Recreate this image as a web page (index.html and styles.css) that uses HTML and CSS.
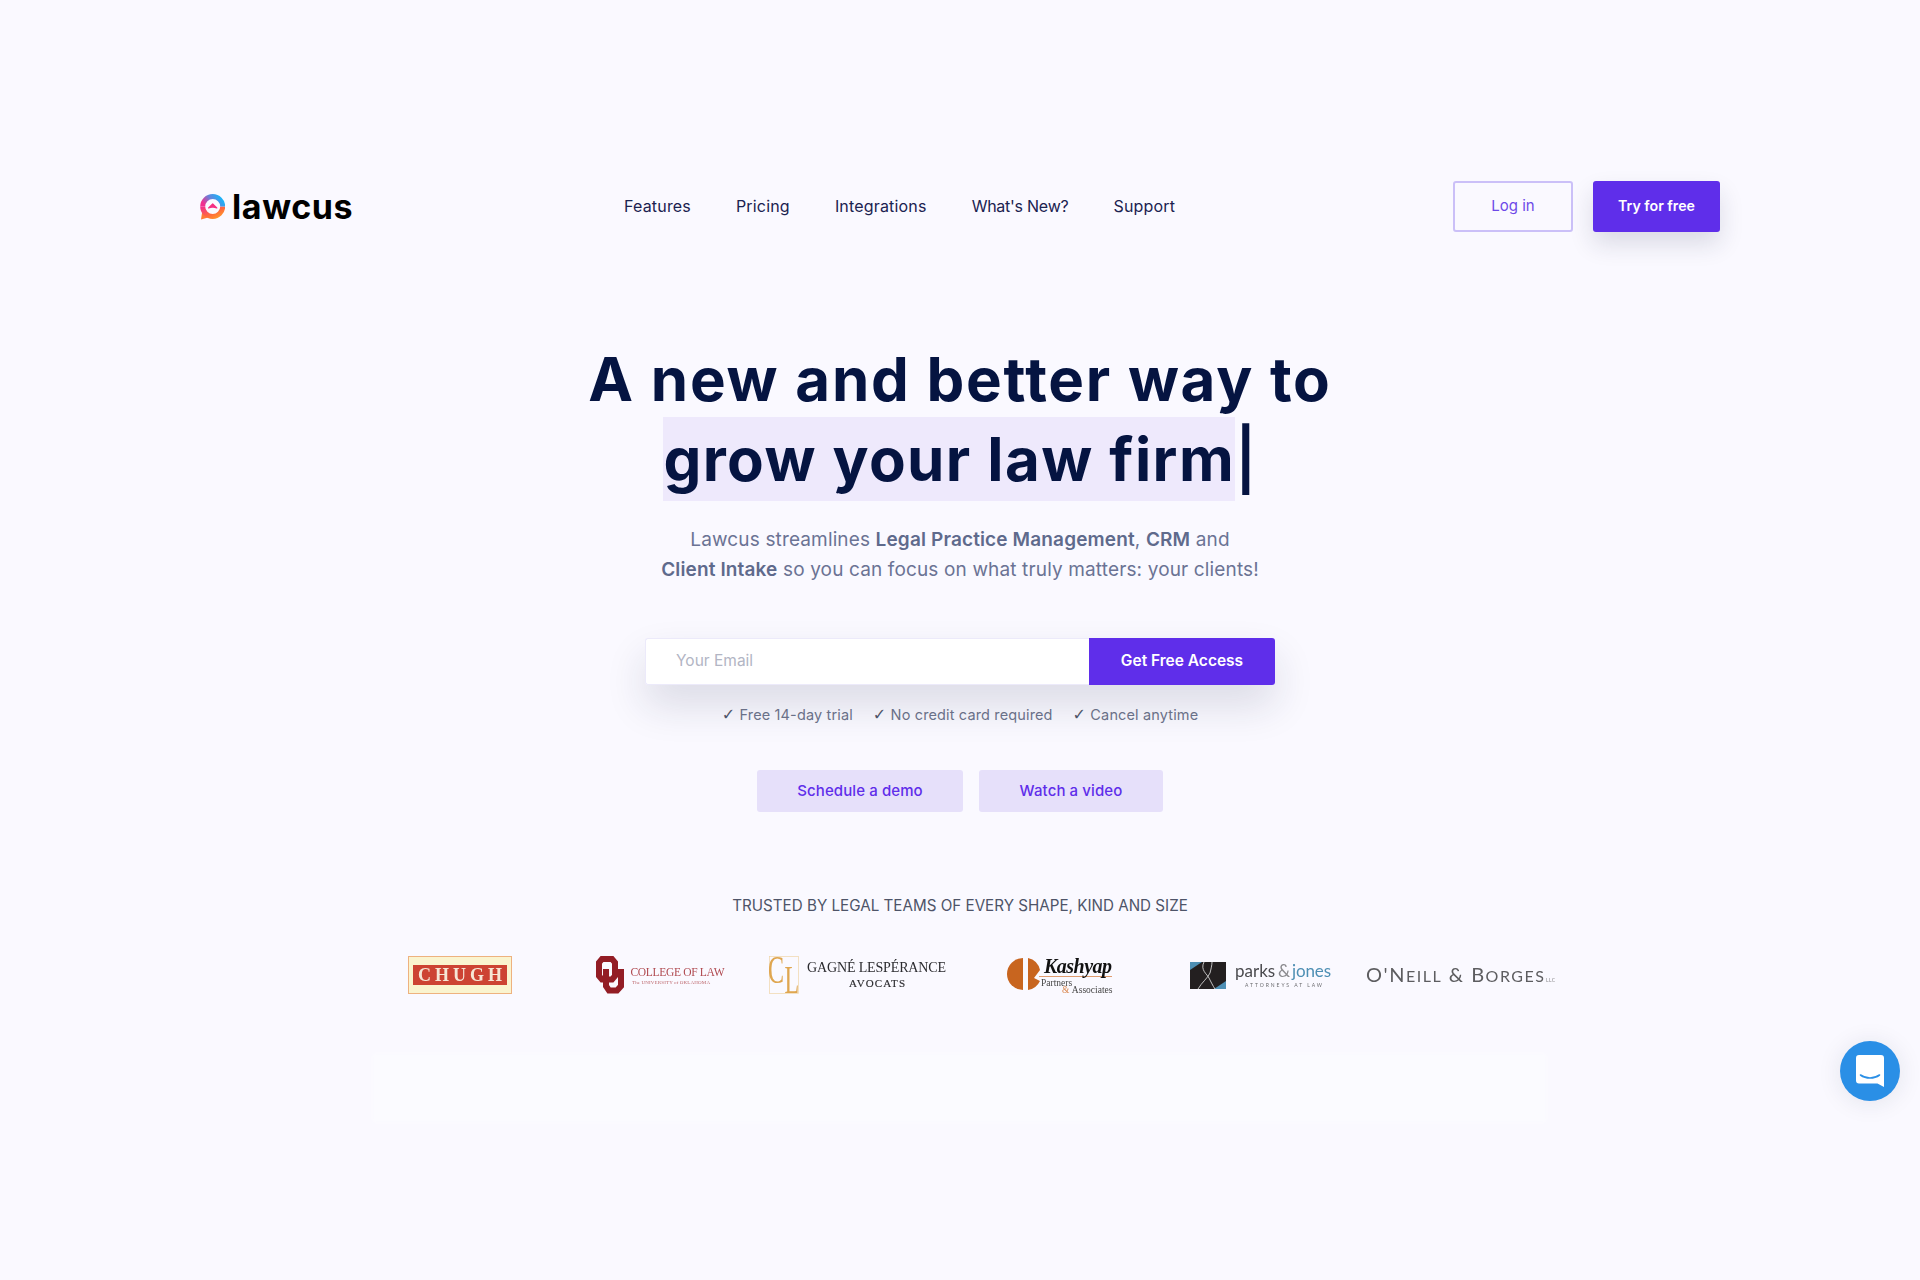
FILE: index.html
```html
<!DOCTYPE html>
<html lang="en">
<head>
<meta charset="utf-8">
<title>Lawcus</title>
<link rel="stylesheet" href="styles.css">
</head>
<body>
<div class="page">
  <header class="header">
    <a class="brand" href="#">
      <svg class="brand-mark" viewBox="0 0 25 27" width="25" height="27" aria-hidden="true">
        <defs>
          <linearGradient id="ringTop" x1="1" y1="0.2" x2="0" y2="0.6"><stop offset="0" stop-color="#12b8fb"/><stop offset="0.55" stop-color="#6e7fd8"/><stop offset="1" stop-color="#f22f8f"/></linearGradient>
          <linearGradient id="ringBot" x1="0" y1="0" x2="1" y2="1"><stop offset="0" stop-color="#f22f8f"/><stop offset="0.6" stop-color="#ff6a3c"/><stop offset="1" stop-color="#ff9a2a"/></linearGradient>
        </defs>
        <path d="M2.5 17 L1 26.5 L10 24 Z" fill="#ff7a35"/>
        <path d="M2.7 13.5 A10 10 0 0 0 22.7 13.5" fill="none" stroke="url(#ringBot)" stroke-width="5"/>
        <path d="M22.7 13.5 A10 10 0 0 0 2.7 13.5" fill="none" stroke="url(#ringTop)" stroke-width="5"/>
        <path d="M8.6 15 L12.7 11 L16.8 15 L12.7 14 Z" fill="#f42f83" stroke="#f42f83" stroke-width="1.2" stroke-linejoin="round"/>
      </svg>
      <span class="brand-name">lawcus</span>
    </a>
    <nav class="nav">
      <a href="#">Features</a>
      <a href="#">Pricing</a>
      <a href="#">Integrations</a>
      <a class="nav-tight" href="#">What's New?</a>
      <a href="#">Support</a>
    </nav>
    <div class="actions">
      <a class="btn btn-outline" href="#">Log in</a>
      <a class="btn btn-solid" href="#">Try for free</a>
    </div>
  </header>

  <section class="hero">
    <h1 class="title">
      <span class="title-line">A new and better way to</span>
      <span class="title-line title-second"><span class="mark">grow your law firm</span><span class="caret">|</span></span>
    </h1>
    <p class="lead">Lawcus streamlines <b>Legal Practice Management</b>, <b>CRM</b> and<br><b>Client Intake</b> so you can focus on what truly matters: your clients!</p>
    <form class="signup">
      <input class="signup-input" type="email" placeholder="Your Email">
      <button class="signup-btn" type="button">Get Free Access</button>
    </form>
    <ul class="checks">
      <li><span class="tick">✓</span> Free 14-day trial</li>
      <li><span class="tick">✓</span> No credit card required</li>
      <li><span class="tick">✓</span> Cancel anytime</li>
    </ul>
    <div class="secondary">
      <a class="btn-soft btn-demo" href="#">Schedule a demo</a>
      <a class="btn-soft btn-video" href="#">Watch a video</a>
    </div>
  </section>

  <section class="trusted">
    <h2 class="trusted-title">TRUSTED BY LEGAL TEAMS OF EVERY SHAPE, KIND AND SIZE</h2>
    <div class="logos">
      <svg class="logo" width="104" height="38" viewBox="0 0 104 38">
        <rect x="0.5" y="0.5" width="103" height="37" fill="#faf4cf" stroke="#eeb27f"/>
        <rect x="5" y="9" width="94" height="20" fill="#cd4333"/>
        <text class="t-serif-b" x="52" y="24.5" font-size="18" text-anchor="middle" fill="#f6e6d6" textLength="84">CHUGH</text>
      </svg>
      <svg class="logo" width="129" height="38" viewBox="0 0 129 38">
        <path d="M6 3 H16 L19 6.5 V20 L16 23.5 H6 L3 20 V6.5 Z" fill="none" stroke="#931d25" stroke-width="6"/>
        <path d="M10 13 V30 L13 34.5 H21 L25 30 V13" fill="none" stroke="#931d25" stroke-width="6"/>
        <text class="t-serif" x="34.5" y="20" font-size="11.5" fill="#b04a50" textLength="94">COLLEGE OF LAW</text>
        <text class="t-serif" x="36" y="27.5" font-size="5" fill="#bd666b" textLength="78">The UNIVERSITY of OKLAHOMA</text>
      </svg>
      <svg class="logo logo-gl" width="177" height="38" viewBox="0 0 177 38">
        <rect x="0.5" y="0.5" width="29" height="37" fill="none" stroke="#efd6a8" stroke-width="0.7"/>
        <text class="t-serif" transform="scale(1 1.7)" x="-1" y="15.9" font-size="24" fill="#dfa650">C</text>
        <text class="t-serif" transform="scale(1 1.7)" x="15.5" y="22" font-size="24" fill="#dfa650">L</text>
        <text class="t-serif" x="38" y="16" font-size="14" fill="#2b2b2f" textLength="139">GAGNÉ LESPÉRANCE</text>
        <text class="t-serif" x="80" y="31" font-size="11" fill="#2b2b2f" stroke="#2b2b2f" stroke-width="0.15" textLength="56">AVOCATS</text>
      </svg>
      <svg class="logo" width="103" height="36" viewBox="0 0 103 36">
        <path d="M14 1 A16 16 0 0 0 14 33 Z" fill="#c8651f"/>
        <path d="M19 1 A16 16 0 0 1 31 13 L25 21 L31 24 A16 16 0 0 1 19 33 Z" fill="#c8651f"/>
        <path d="M30 19.5 H103" stroke="#d9844a" stroke-width="0.8"/>
        <text class="t-script" x="35" y="16" font-size="20" fill="#111" textLength="68">Kashyap</text>
        <text class="t-serif" x="32" y="29" font-size="9.5" fill="#444">Partners<tspan x="53" dy="6.5" fill="#d9844a">&amp;</tspan><tspan x="61"> Associates</tspan></text>
      </svg>
      <svg class="logo" width="141" height="27" viewBox="0 0 141 27">
        <rect width="36" height="27" fill="#231f20"/>
        <path d="M0 0 H12 L0 8 Z M36 27 H24 L36 19 Z" fill="#4e8fb4"/>
        <path d="M14 0 C10 8 17 12 19 16 C21 20 23 24 25 27 M8 27 C12 20 17 17 20 11 C21 7 22 3 22 0" fill="none" stroke="#e8e8e8" stroke-width="0.8"/>
        <text class="t-sans-light" x="45" y="15" font-size="17" fill="#4b4b4f">parks</text>
        <text class="t-sans-light" x="88" y="15" font-size="17" fill="#8a8a8e">&amp;</text>
        <text class="t-sans-light" x="102" y="15" font-size="17" fill="#4e8fb4" textLength="39">jones</text>
        <text class="t-sans-light" x="55" y="24.5" font-size="5" fill="#6a6a6e" textLength="77">ATTORNEYS AT LAW</text>
      </svg>
      <svg class="logo" width="189" height="20" viewBox="0 0 189 20">
        <text class="t-sans-light" x="0" y="17" font-size="20" fill="#5d5d60" textLength="178">O'N<tspan font-size="16">EILL</tspan> &amp; B<tspan font-size="16">ORGES</tspan></text>
        <text class="t-sans-light" x="180" y="17" font-size="5" fill="#8a8a8c" textLength="9">LLC</text>
      </svg>
    </div>
  </section>

  <div class="panel"></div>

  <a class="chat" href="#" aria-label="Chat">
    <svg viewBox="0 0 28 32" width="28" height="32" aria-hidden="true">
      <path d="M3 0 H25 A3 3 0 0 1 28 3 V32 L21.5 28.5 H3 A3 3 0 0 1 0 25.5 V3 A3 3 0 0 1 3 0 Z" fill="#fff"/>
      <path d="M4.5 20 C10 24 18 24 23.5 20" fill="none" stroke="#2a8fe6" stroke-width="1.6" stroke-linecap="round"/>
    </svg>
  </a>
</div>
</body>
</html>
```
FILE: styles.css
```css
* { box-sizing: border-box; }
html, body { margin: 0; padding: 0; }
body {
  background: #faf9ff;
  font-family: Inter, "Noto Sans", sans-serif;
  color: #051441;
}
a { text-decoration: none; color: inherit; }
.page { position: relative; min-height: 1280px; padding-top: 181px; }

.header { display: flex; align-items: center; height: 51px; padding: 0 200px; }
.brand { display: flex; align-items: center; gap: 7px; width: 152px; }
.brand-mark { display: block; flex: none; margin-top: -1px; }
.brand-name { font-size: 34px; line-height: 40px; font-weight: 700; color: #000; letter-spacing: 0.6px; }
.nav { display: flex; gap: 45px; margin-left: 272px; padding-bottom: 2px; font-size: 16px; line-height: 24px; letter-spacing: 0.18px; color: #1b2250; }
.nav-tight { letter-spacing: -0.25px; }
.actions { display: flex; gap: 20px; margin-left: auto; }
.btn { display: flex; align-items: center; justify-content: center; height: 51px; padding-bottom: 2px; border-radius: 3px; font-size: 15px; }
.btn-outline { width: 120px; border: 2px solid #cbc0f8; color: #6d49e8; }
.btn-solid { width: 127px; background: #5f2eea; color: #fff; font-size: 14.2px; font-weight: 600; box-shadow: 0 12px 24px rgba(30, 35, 70, 0.14); }

.hero { display: flex; flex-direction: column; align-items: center; }
.title { margin: 107px 0 0; padding-bottom: 1px; font-size: 60px; line-height: 80px; font-weight: 700; letter-spacing: 1.75px; color: #051441; text-align: center; }
.title-line { display: block; }
.title-second { display: flex; justify-content: center; align-items: center; height: 80px; }
.mark { display: block; height: 84px; line-height: 84px; letter-spacing: 1.4px; background: #eee9fc; }
.caret { display: block; line-height: 80px; font-weight: 600; letter-spacing: 0; }
.lead { margin: 25px 0 0; font-size: 19px; line-height: 30px; letter-spacing: 0.14px; color: #6b7394; text-align: center; }
.lead b { font-weight: 600; color: #5f6a8c; }
.signup { display: flex; width: 630px; height: 47px; margin-top: 53px; border-radius: 3px; box-shadow: 0 20px 40px rgba(30, 35, 70, 0.14); }
.signup-input { flex: 1; min-width: 0; padding: 0 30px 2px; border: 1px solid #eceafa; border-right: 0; border-radius: 3px 0 0 3px; background: #fff; font: 15.5px Inter, sans-serif; outline: none; }
.signup-input::placeholder { color: #b2b5c4; }
.signup-btn { width: 186px; padding: 0 0 2px; border: 0; border-radius: 0 3px 3px 0; background: #5f2eea; color: #fff; font: 600 15.5px Inter, sans-serif; }
.checks { display: flex; gap: 20px; margin: 20px 0 0; padding: 0; list-style: none; font-size: 14.5px; line-height: 20px; letter-spacing: 0.14px; color: #6a7088; }
.tick { font-family: "DejaVu Sans", sans-serif; font-size: 16px; color: #4e5468; }
.secondary { display: flex; gap: 16px; margin-top: 45px; }
.btn-soft { display: flex; align-items: center; justify-content: center; height: 42px; padding-bottom: 2px; border-radius: 3px; background: #e6e0fa; color: #5f2eea; font-size: 15px; font-weight: 500; letter-spacing: 0.1px; }
.btn-demo { width: 206px; }
.btn-video { width: 184px; }

.trusted { display: flex; flex-direction: column; align-items: center; margin-top: 82px; }
.trusted-title { margin: 0; font-size: 15.2px; line-height: 24px; font-weight: 400; color: #4e5468; }
.logos { display: grid; grid-template-columns: repeat(6, 200px); justify-items: center; align-items: center; height: 38px; margin-top: 38px; }
.logo { display: block; overflow: visible; filter: blur(0.35px); }
.logo-gl { margin-left: -5px; }
.t-serif { font-family: "Liberation Serif", serif; }
.t-serif-b { font-family: "Liberation Serif", serif; font-weight: 700; }
.t-script { font-family: "Liberation Serif", serif; font-style: italic; font-weight: 700; }
.t-sans-light { font-family: Lato, sans-serif; font-weight: 400; }

.panel { width: 1171px; height: 66px; margin: 61px 0 0 374px; background: #fbfbff; box-shadow: 0 0 3px 1px #fbfbff; }

.chat { position: absolute; left: 1840px; top: 1041px; display: flex; align-items: center; justify-content: center; width: 60px; height: 60px; border-radius: 50%; background: #2a8fe6; box-shadow: 0 2px 24px rgba(30, 35, 70, 0.1); }
.chat svg { display: block; }
```
